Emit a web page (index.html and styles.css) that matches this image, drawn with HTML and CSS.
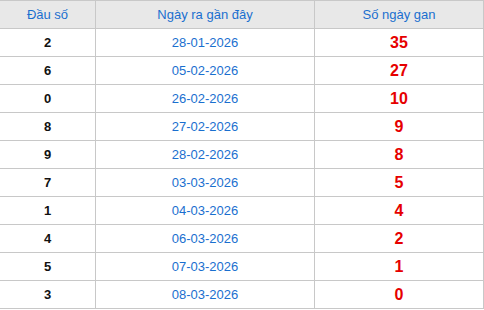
FILE: index.html
```html
<!DOCTYPE html>
<html>

<head>
    <title>Lô gan</title>
    <link rel="stylesheet" href="styles.css">
</head>

<body>
    <table class="gan-table">
        <thead>
            <tr>
                <th class="col-dau">Đầu số</th>
                <th class="col-ngay">Ngày ra gần đây</th>
                <th>Số ngày gan</th>
            </tr>
        </thead>
        <tbody>
            <tr><td class="dau">2</td><td class="ngay">28-01-2026</td><td class="gan">35</td></tr>
            <tr><td class="dau">6</td><td class="ngay">05-02-2026</td><td class="gan">27</td></tr>
            <tr><td class="dau">0</td><td class="ngay">26-02-2026</td><td class="gan">10</td></tr>
            <tr><td class="dau">8</td><td class="ngay">27-02-2026</td><td class="gan">9</td></tr>
            <tr><td class="dau">9</td><td class="ngay">28-02-2026</td><td class="gan">8</td></tr>
            <tr><td class="dau">7</td><td class="ngay">03-03-2026</td><td class="gan">5</td></tr>
            <tr><td class="dau">1</td><td class="ngay">04-03-2026</td><td class="gan">4</td></tr>
            <tr><td class="dau">4</td><td class="ngay">06-03-2026</td><td class="gan">2</td></tr>
            <tr><td class="dau">5</td><td class="ngay">07-03-2026</td><td class="gan">1</td></tr>
            <tr><td class="dau">3</td><td class="ngay">08-03-2026</td><td class="gan">0</td></tr>
        </tbody>
    </table>
</body>

</html>
```

FILE: styles.css
```css
body {
    margin: 0;
    background: #fff;
    font-family: "Liberation Sans", Arial, sans-serif;
}

.gan-table {
    width: 484px;
    border-collapse: collapse;
    table-layout: fixed;
}

.gan-table th,
.gan-table td {
    height: 27px;
    padding: 0;
    text-align: center;
    border: 1px solid #c8c8c8;
}

.gan-table tr > :first-child {
    border-left: none;
}

.gan-table th {
    background-color: #e8e8e8;
    color: #1a6fcf;
    font-size: 13px;
    font-weight: normal;
    border-top: 1px solid #c8c8c8;
}

.col-dau {
    width: 95px;
}

.col-ngay {
    width: 218px;
}

.dau {
    font-size: 13px;
    font-weight: bold;
    color: #111;
}

.ngay {
    font-size: 13px;
    color: #1a6fcf;
}

.gan {
    font-size: 16px;
    font-weight: bold;
    color: #e60000;
}
```
